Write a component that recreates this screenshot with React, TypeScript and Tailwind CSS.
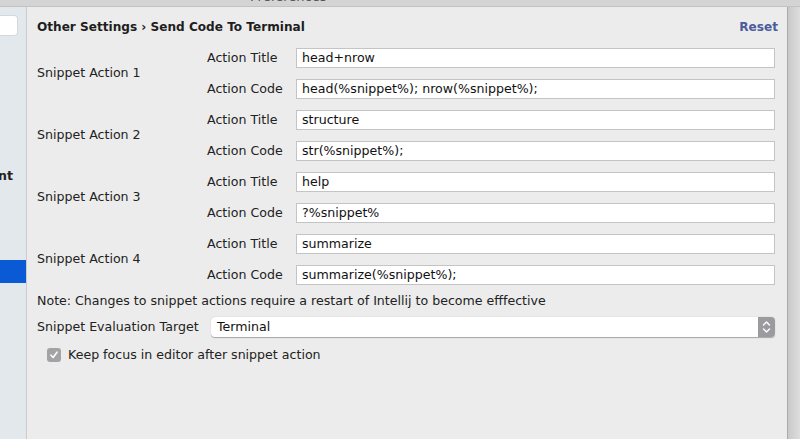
import React from "react";

const font = { fontFamily: '"DejaVu Sans", "Noto Sans", sans-serif' };

const actions = [
  { title: "head+nrow", code: "head(%snippet%); nrow(%snippet%);" },
  { title: "structure", code: "str(%snippet%);" },
  { title: "help", code: "?%snippet%" },
  { title: "summarize", code: "summarize(%snippet%);" },
];

function Field({ label, value }: { label: string; value: string }) {
  return (
    <div className="flex items-center h-[20px]">
      <span className="w-[89px] shrink-0 text-[12.6px] text-[#222]">{label}</span>
      <div className="flex-1 h-[20px] bg-white border border-[#c4c4c4] flex items-center px-[5px] text-[12.6px] text-[#111]">
        {value}
      </div>
    </div>
  );
}

export default function App() {
  return (
    <div className="w-[800px] h-[439px] overflow-hidden flex flex-col bg-[#ececec] text-[#222]" style={font}>
      {/* window title bar, mostly cut off */}
      <div className="h-[7px] shrink-0 bg-[#d4d4d4] border-b border-[#c2c2c2] overflow-hidden relative">
        <span className="absolute left-[250px] top-[-10px] text-[13px] text-[#555] leading-[14px]">Preferences</span>
      </div>

      <div className="flex flex-1 min-h-0">
        {/* sidebar */}
        <div className="w-[27px] shrink-0 bg-[#e3e8ed] border-r border-[#c9ccd0] flex flex-col">
          <div className="mt-[8px] h-[21px] w-[18px] bg-white rounded-r-[4px] border border-l-0 border-[#d4d8dc]" />
          <div className="mt-[131px] h-[18px] flex items-center justify-end pr-[13px] overflow-hidden">
            <span className="text-[12.6px] font-bold whitespace-nowrap text-[#222]">nt</span>
          </div>
          <div className="mt-[75px] h-[23px] bg-[#0a5ad6]" />
        </div>

        {/* main */}
        <div className="flex-1 flex flex-col pl-[10px] pr-[12px] pt-[11px]">
          <div className="flex items-center justify-between h-[18px] mr-[-3px]">
            <span className="text-[12.1px] font-bold text-[#1e1e1e]">Other Settings › Send Code To Terminal</span>
            <span className="text-[12.1px] font-bold text-[#4b5b9b]">Reset</span>
          </div>

          <div className="mt-[12px] flex flex-col gap-[11px]">
            {actions.map((a, i) => (
              <div key={i} className="flex items-center">
                <span className="w-[170px] shrink-0 text-[12.6px]">Snippet Action {i + 1}</span>
                <div className="flex-1 flex flex-col gap-[11px]">
                  <Field label="Action Title" value={a.title} />
                  <Field label="Action Code" value={a.code} />
                </div>
              </div>
            ))}
          </div>

          <div className="mt-[8px] h-[16px] flex items-center text-[12.6px]">
            Note: Changes to snippet actions require a restart of Intellij to become efffective
          </div>

          <div className="mt-[8px] flex items-center h-[20px]">
            <span className="w-[174px] shrink-0 text-[12.6px]">Snippet Evaluation Target</span>
            <div className="flex-1 h-[20px] flex bg-white rounded-[4px] shadow-[0_0.5px_1px_rgba(0,0,0,0.3)]">
              <div className="flex-1 flex items-center px-[6px] text-[12.6px] text-[#111]">Terminal</div>
              <div className="w-[17px] bg-[#9b9b9f] rounded-r-[4px] flex items-center justify-center">
                <svg width="9" height="14" viewBox="0 0 9 14" fill="none">
                  <path d="M1.5 5L4.5 2L7.5 5" stroke="white" strokeWidth="1.4" strokeLinecap="round" strokeLinejoin="round" />
                  <path d="M1.5 9L4.5 12L7.5 9" stroke="white" strokeWidth="1.4" strokeLinecap="round" strokeLinejoin="round" />
                </svg>
              </div>
            </div>
          </div>

          <div className="mt-[11px] ml-[10px] flex items-center h-[14px]">
            <div className="w-[14px] h-[14px] rounded-[3px] bg-[#a3a3a6] flex items-center justify-center">
              <svg width="10" height="10" viewBox="0 0 10 10" fill="none">
                <path d="M2 5.2L4.1 7.5L8 2.2" stroke="white" strokeWidth="1.6" strokeLinecap="round" strokeLinejoin="round" />
              </svg>
            </div>
            <span className="ml-[7px] text-[12.6px]">Keep focus in editor after snippet action</span>
          </div>
        </div>

        {/* right edge */}
        <div className="w-[13px] shrink-0 border-l border-[#a9a9a9] bg-gradient-to-r from-[#c9c9c9] to-[#dedede]" />
      </div>
    </div>
  );
}
